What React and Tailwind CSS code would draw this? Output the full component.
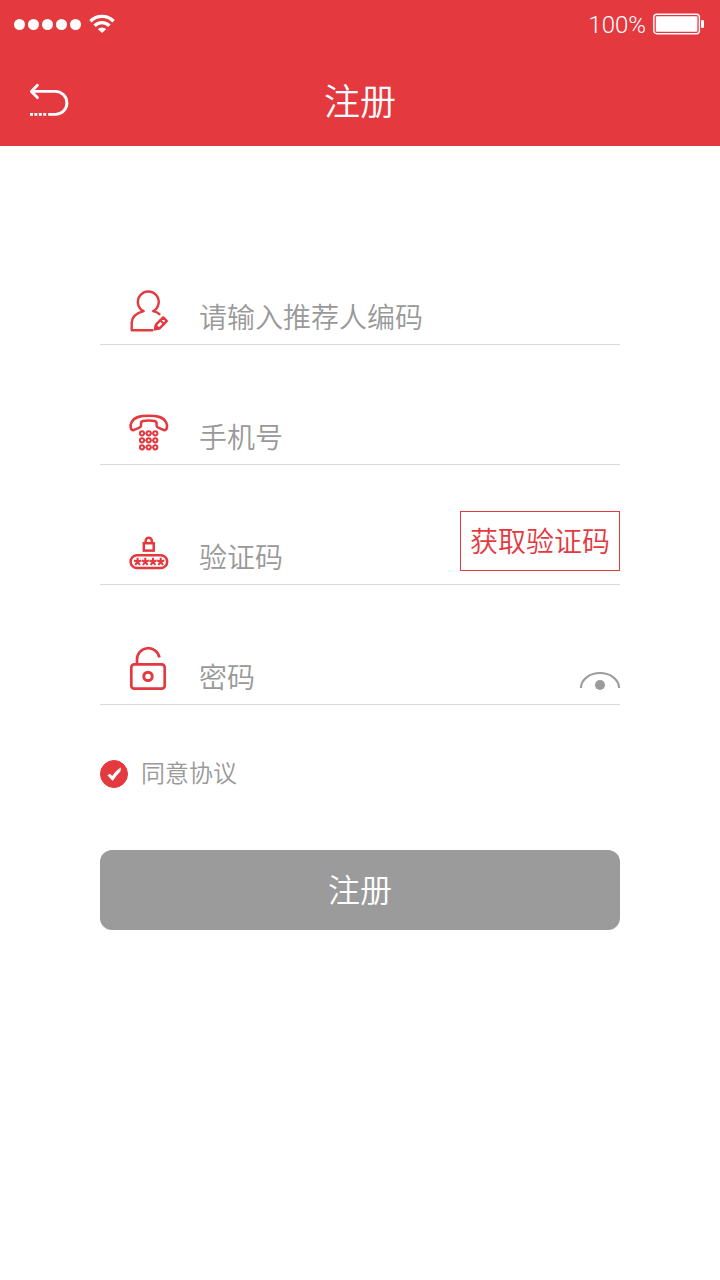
import { useState } from 'react';

function UserIcon({ label }) {
  return (
    <svg className="h-12 w-12" viewBox="0 -1 48 48" fill="none" stroke="#e4393f" strokeWidth="2.4" strokeLinecap="round" strokeLinejoin="round" role="img" aria-label={label}>
      <path d="M19.4 26.1A10.4 10.4 0 1 1 29.2 26.1Q33 27 35.4 29.2" />
      <path d="M19.4 26.1C12 28.2 7.8 32 7.7 37.5V45.3H28.4" />
      <path d="M31 44.4L32 39.6L39.2 32.4L42.8 36.2L35.6 43.4Z" />
      <path d="M36.4 35.4L40 39" strokeWidth="2" />
      <path d="M31 44.4L31.8 40L35.2 43.4Z" fill="#e4393f" strokeWidth="1.6" />
    </svg>
  );
}

function PhoneIcon({ label }) {
  const columns = [18, 24.7, 31.3];
  const rows = [29.3, 36.3, 43.3];
  return (
    <svg className="h-12 w-12" viewBox="0 0 48 48" fill="none" stroke="#e4393f" strokeWidth="2.5" strokeLinejoin="round" role="img" aria-label={label}>
      <path d="M9.6 26.2C6.2 26.4 5.9 21.4 7.6 18.2C10.2 13 15.6 11.7 24.8 11.7S39.4 13 42 18.2C43.7 21.4 43.4 26.4 40 26.2L34.2 23.6Q32.6 22.9 32.6 21.4V19.4Q32.6 17.5 30.6 17Q24.8 15.8 19 17Q17 17.5 17 19.4V21.4Q17 22.9 15.4 23.6Z" />
      {rows.map((cy) => columns.map((cx) => <circle key={cx + '-' + cy} cx={cx} cy={cy} r="2.1" strokeWidth="2" />))}
      {rows.map((cy) => <path key={cy} d={'M20.5 ' + cy + 'H22.2M27.1 ' + cy + 'H28.8'} strokeWidth="1" />)}
    </svg>
  );
}

function CodeIcon({ label }) {
  return (
    <svg className="h-12 w-12" viewBox="0 0 48 48" fill="none" stroke="#e4393f" strokeWidth="2.5" role="img" aria-label={label}>
      <rect x="6.6" y="31.3" width="36.6" height="12.8" rx="6.4" />
      {[13.6, 21.3, 29, 36.7].map((x) => (
        <path key={x} d={'M' + x + ' 37.7v-3.9m0 3.9l-3.6-1.1m3.6 1.1l3.6-1.1m-3.6 1.1l-2.3 3.3m2.3-3.3l2.3 3.3'} strokeWidth="2.1" />
      ))}
      <rect x="19.8" y="19.2" width="9.9" height="7.4" />
      <path d="M21.6 19.2V16.9A3.15 3.15 0 0 1 27.9 16.9V19.2" />
    </svg>
  );
}

function LockIcon({ label }) {
  return (
    <svg className="h-12 w-12" viewBox="0 0 48 48" fill="none" stroke="#e4393f" strokeWidth="2.7" role="img" aria-label={label}>
      <rect x="7.3" y="20.4" width="33.4" height="24.3" rx="3" />
      <circle cx="24" cy="32.4" r="4.2" strokeWidth="3" />
      <path d="M13 20V15.6A11.3 11.3 0 0 1 35.4 13.4" />
    </svg>
  );
}

function Field({ id, label, Icon, type = 'text', children }) {
  return (
    <div className="flex h-[120px] items-end border-b border-[#d9d9d9] pl-6">
      <label htmlFor={id} className="mb-3 shrink-0">
        <Icon label={label} />
      </label>
      <input
        id={id}
        type={type}
        placeholder={label}
        className="ml-[27px] h-14 w-0 min-w-0 flex-1 bg-transparent pb-px text-[28px] text-[#999] outline-none placeholder:text-[#999]"
      />
      {children}
    </div>
  );
}

export default function App() {
  const [agreed, setAgreed] = useState(true);
  const [visible, setVisible] = useState(false);
  return (
    <div className="min-h-screen bg-white font-['Noto_Sans_CJK_SC',sans-serif] font-[350]">
      <header className="bg-[#e4393f] text-white">
        <div className="flex h-12 items-center justify-between pr-4 pl-3.5">
          <div className="flex items-center gap-2">
            <div className="flex gap-[3px]">
              <span className="size-[11px] rounded-full bg-white" />
              <span className="size-[11px] rounded-full bg-white" />
              <span className="size-[11px] rounded-full bg-white" />
              <span className="size-[11px] rounded-full bg-white" />
              <span className="size-[11px] rounded-full bg-white" />
            </div>
            <svg className="h-5 w-[26px]" viewBox="0 0 26 20" fill="none" stroke="#fff" strokeWidth="3.4" aria-hidden="true">
              <path d="M1.4 7.2A16.4 16.4 0 0 1 24.6 7.2" />
              <path d="M5.6 11.7A10.4 10.4 0 0 1 20.4 11.7" />
              <path d="M13 19L8.8 15Q13 11.8 17.2 15Z" fill="#fff" stroke="none" />
            </svg>
          </div>
          <div className="flex items-center gap-[7px]">
            <span className="pt-0.5 font-[Roboto,sans-serif] text-2xl leading-none font-light">100%</span>
            <svg className="h-[22px] w-[51px]" viewBox="0 0 51 22" fill="none" aria-hidden="true">
              <rect x="0.8" y="1.3" width="45.6" height="19.4" rx="3" stroke="#fff" strokeWidth="1.4" />
              <rect x="2.8" y="3.2" width="41.6" height="15.6" rx="1" fill="#fff" />
              <rect x="48" y="7" width="3" height="8" rx="1.3" fill="#fff" />
            </svg>
          </div>
        </div>
        <div className="grid h-[98px] grid-cols-[1fr_auto_1fr] items-center px-7 pt-1">
          <button type="button" aria-label="返回" className="justify-self-start">
            <svg className="block h-9 w-[42px]" viewBox="0 -2 42 36" fill="none" stroke="#fff" strokeWidth="2.9" aria-hidden="true">
              <path d="M3.6 8.4H27.4A11.5 11.5 0 0 1 27.4 31.4H20.2" />
              <path d="M9.4 2.2L3.4 8.4L9.4 14.6" strokeLinecap="round" strokeLinejoin="round" />
              <path d="M2 31.4H5M6.4 31.4H9.4M10.8 31.4H13.8M15.2 31.4H18.2" />
            </svg>
          </button>
          <h1 className="text-4xl">注册</h1>
        </div>
      </header>

      <form className="px-[100px] pt-[79px]" onSubmit={(e) => e.preventDefault()}>
        <Field id="referrer" label="请输入推荐人编码" Icon={UserIcon} />
        <Field id="phone" label="手机号" type="tel" Icon={PhoneIcon} />
        <Field id="code" label="验证码" Icon={CodeIcon}>
          <button type="button" className="mb-[13px] h-[60px] w-40 shrink-0 border border-[#e4393f] pb-0.5 text-[28px] leading-none text-[#e4393f]">
            获取验证码
          </button>
        </Field>
        <Field id="password" label="密码" type={visible ? 'text' : 'password'} Icon={LockIcon}>
          <button type="button" aria-label="显示密码" className="mb-3.5 shrink-0" onClick={() => setVisible(!visible)}>
            <svg className="block h-[18px] w-10" viewBox="0 0 40 18" aria-hidden="true">
              <path d="M1 16A19 15 0 0 1 39 16" fill="none" stroke="#9b9b9b" strokeWidth="2" />
              <circle cx="20" cy="13" r="5" fill="#9b9b9b" />
            </svg>
          </button>
        </Field>

        <label className="mt-[55px] flex h-7 items-center gap-[13px] text-2xl leading-none text-[#999]">
          <span className="grid size-7">
            <input
              type="checkbox"
              checked={agreed}
              onChange={(e) => setAgreed(e.target.checked)}
              className="peer col-start-1 row-start-1 size-7 appearance-none rounded-full border border-[#e4393f] checked:bg-[#e4393f]"
            />
            <svg className="pointer-events-none invisible col-start-1 row-start-1 size-7 peer-checked:visible" viewBox="0 0 28 28" aria-hidden="true">
              <path d="M7.4 15.2L10 13.8L12.2 16Q16 10 21 7.4L20.4 11.4Q16.4 15 13.2 20.6H12.2Z" fill="#fff" />
            </svg>
          </span>
          <span className="pb-1">同意协议</span>
        </label>

        <button type="submit" className="mt-[62px] h-20 w-full rounded-xl bg-[#9b9b9b] pb-1 text-[32px] leading-none text-white">
          注册
        </button>
      </form>
    </div>
  );
}
